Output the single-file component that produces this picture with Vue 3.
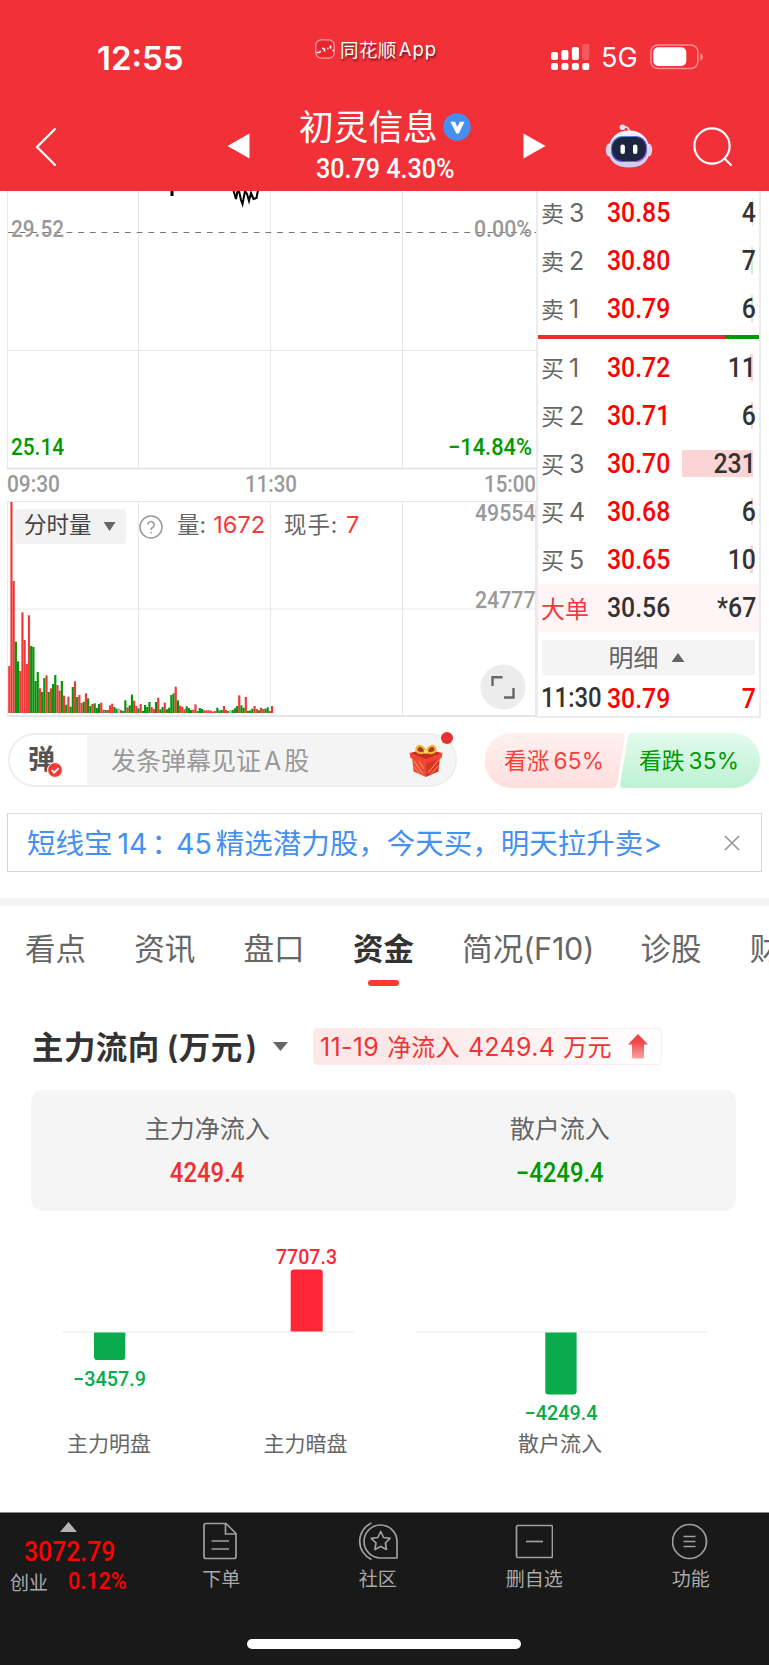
<template>
  <div class="page" lang="zh-CN">
    <header class="header">
      <div class="status">
        <span class="clock">12:55</span>
        <span class="app">
          <svg class="app-logo" viewBox="0 0 20 20">
            <rect x="0.8" y="0.8" width="18.4" height="18.4" rx="5.5" fill="#e8262d" stroke="#f79a9d" stroke-width="1.3" />
            <path d="M1.5 13.5h2.2M4 14l1.6-2M7 9.5h2M9.5 12.5v-3M12 9.5h1.6M15.5 6.5v3M17.5 11.5h1.5" fill="none" stroke="#fff" stroke-width="1.7" />
          </svg>
          <span class="app-name">同花顺</span><span class="app-latin">App</span>
        </span>
        <span class="signal">
          <svg width="39" height="28" viewBox="0 0 39 28" fill="#fff">
            <rect x="0" y="9" width="7" height="8" rx="2" /><rect x="10.4" y="7" width="7" height="10" rx="2" />
            <rect x="20.9" y="4" width="7" height="13" rx="2" /><rect x="31.3" y="1" width="7" height="16" rx="2" opacity="0.2" />
            <rect v-for="n in 4" :key="n" :x="(n - 1) * 10.43" y="20" width="7" height="7" rx="2" />
          </svg>
          <span class="net">5G</span>
          <svg width="54" height="26" viewBox="0 0 54 26">
            <rect x="0.9" y="0.9" width="47" height="23.6" rx="7" fill="none" stroke="#fff" stroke-opacity="0.45" stroke-width="1.5" />
            <rect x="3.3" y="3.3" width="33" height="18.6" rx="5" fill="#fff" />
            <path d="M50.4 9v8q2.6-1.4 2.6-4t-2.6-4z" fill="#fff" opacity="0.45" />
          </svg>
        </span>
      </div>
      <nav class="nav">
        <svg class="back" width="22" height="40" viewBox="0 0 22 40"><path d="M20.5 1.5L2 20l18.5 18.5" fill="none" stroke="#fff" stroke-width="2.3" /></svg>
        <svg class="arrow" width="23" height="26" viewBox="0 0 23 26"><path d="M0.5 13L22.5 0.5v25z" fill="#fff" /></svg>
        <div class="title">
          <div class="name">
            <span>初灵信息</span>
            <svg width="28" height="28" viewBox="0 0 28 28"><circle cx="14" cy="14" r="13.7" fill="#458ff0" /><path d="M7.4 8.8h4.6l2.4 5.2 2.4-5.2h4.7L15.8 20.5h-2.4z" fill="#fff" /></svg>
          </div>
          <div class="price din">30.79 4.30%</div>
        </div>
        <svg class="arrow" width="23" height="26" viewBox="0 0 23 26"><path d="M22.5 13L0.5 0.5v25z" fill="#fff" /></svg>
        <svg class="robot" width="48" height="44" viewBox="0 0 48 44">
          <defs>
            <linearGradient id="shell" x1="0" y1="0" x2="0" y2="1"><stop offset="0" stop-color="#f6f5fd" /><stop offset="1" stop-color="#c9cce8" /></linearGradient>
            <linearGradient id="glow" x1="0" y1="0" x2="1" y2="1"><stop offset="0" stop-color="#3fb6e8" /><stop offset="0.5" stop-color="#5a4be0" /><stop offset="1" stop-color="#b05cf0" /></linearGradient>
          </defs>
          <path d="M18 3q6-1 6.500 5" fill="none" stroke="#d5d7ef" stroke-width="1.6" />
          <circle cx="17.5" cy="3.2" r="2.8" fill="#dfe1f5" />
          <ellipse cx="4" cy="26" rx="3.2" ry="6.500" fill="#d3d5ec" /><ellipse cx="44" cy="26" rx="3.2" ry="6.500" fill="#d3d5ec" />
          <path d="M24 6.500C36 6.500 44 14 44.500 26 44.500 38 36 43.500 24 43.500S3.500 38 3.500 26C4 14 12 6.500 24 6.500z" fill="url(#shell)" />
          <rect x="6.500" y="12.500" width="35" height="25" rx="11" fill="#1d2540" stroke="url(#glow)" stroke-width="1.2" />
          <rect x="15.500" y="20.500" width="4.400" height="9.500" rx="2" fill="#fff" /><rect x="28" y="20.500" width="4.400" height="9.500" rx="2" fill="#fff" />
        </svg>
        <svg class="search" width="40" height="40" viewBox="0 0 40 40" fill="none" stroke="#fff" stroke-width="2.2"><circle cx="19" cy="19" r="17.6" /><path d="M31 31l7.5 7.5" /></svg>
      </nav>
    </header>

    <section class="quote">
      <div class="charts">
        <svg class="chart" width="530" height="527" viewBox="7 191 530 527">
          <g stroke="#e8e8e8" stroke-width="1" fill="none">
            <path d="M138.5 191v278M270.5 191v278M402.5 191v278M138.5 501v215M270.5 501v215M402.5 501v215" />
            <path d="M7.5 191v278M7.5 501v216M8 350.5h528M8 501.5h528M8 609h528M535.5 501v215" />
            <path d="M7 468.5h530M7 716h530" stroke-width="2" stroke="#e6e6e6" />
          </g>
          <path d="M171.5 189v7M172.5 196v-7M233 189l3 10 1.5-8h1.500l2 9 1.500 4 2.500-13 2 3 2 7 2-8 2.500 6 3-1 1.500-8" fill="none" stroke="#000" stroke-width="2" />
          <path d="M8 232.5h528" stroke="#777" stroke-width="1.1" stroke-dasharray="5.8 5.9" />
          <rect v-for="(b, i) in volumes" :key="i" :x="8.2 + i * 2.19" :y="713 - b[0] / 3" width="2.19" :height="b[0] / 3" :fill="b[1]" />
          <text
            v-for="l in chartLabels" :key="l.text" class="axis" :class="l.tone" :x="l.x" :y="l.y"
            :textLength="l.w" lengthAdjust="spacingAndGlyphs"
          >{{ l.text }}</text>
          <circle cx="503" cy="687" r="22.5" fill="#ececec" />
          <path d="M492.500 686v-8.800h10M504 697.500h9.500v-9.500" fill="none" stroke="#666" stroke-width="2.4" />
        </svg>
        <div class="vol-bar">
          <span class="vol-select">分时量<i class="caret" /></span>
          <svg width="24" height="24" viewBox="0 0 24 24" fill="none" stroke="#999" stroke-width="1.5"><circle cx="12" cy="12" r="11" /><path d="M8.8 9.600a3.200 3.200 0 1 1 4.800 2.900q-1.600.9-1.600 2.500" /><path d="M12 16.700v1.700" /></svg>
          <span class="vol-item">量: <b>1672</b></span>
          <span class="vol-item">现手: <b>7</b></span>
        </div>
      </div>

      <div class="book">
        <div v-for="r in asks" :key="r.label" class="row">
          <span class="label">{{ r.label[0] }}<em>{{ r.label[1] }}</em></span>
          <span class="din bid">{{ r.price }}</span>
          <span class="qty"><i class="depth ask" :style="{ width: r.bar + 'px' }" /><span class="din">{{ r.qty }}</span></span>
        </div>
        <div class="ratio" />
        <div v-for="r in bids" :key="r.label" class="row">
          <span class="label">{{ r.label[0] }}<em>{{ r.label[1] }}</em></span>
          <span class="din bid">{{ r.price }}</span>
          <span class="qty"><i class="depth" :style="{ width: r.bar + 'px' }" /><span class="din">{{ r.qty }}</span></span>
        </div>
        <div class="row big">
          <span class="label">大单</span>
          <span class="din">30.56</span>
          <span class="qty"><span class="din">*67</span></span>
        </div>
        <div class="detail"><span>明细</span><i class="caret up" /></div>
        <div class="row tick">
          <span class="din time">11:30</span>
          <span class="din bid">30.79</span>
          <span class="qty"><span class="din bid">7</span></span>
        </div>
      </div>
    </section>

    <section class="danmu">
      <div class="input">
        <span class="toggle">
          弹
          <svg class="check" viewBox="0 0 16 16"><circle cx="8" cy="8" r="7.4" fill="#f23a35" stroke="#fff" stroke-width="1" /><path d="M4.600 8l2.600 2.700 4.400-4.500" fill="none" stroke="#fff" stroke-width="1.8" /></svg>
        </span>
        <span class="hint">发条弹幕见证<em>A</em>股</span>
        <svg class="gift" width="34" height="35" viewBox="0 0 34 35">
          <path d="M3 13L17 18v16L4.500 28.500z" fill="#ee4b33" /><path d="M31 13L17 18v16l12.500-5.500z" fill="#d93425" />
          <path d="M1 10L17 6l16 4L17 17.500z" fill="#c92a1f" /><path d="M0.500 9.500L17 16v4.500L1.500 15zM33.500 9.500L17 16v4.500L32.500 15z" fill="#f0452f" />
          <path d="M5 18l9 13M4.500 23l6 7.500M29.500 17L19 30M30 22l-8 9M10 18l5 8" stroke="#f98a5e" stroke-width="1.1" />
          <path d="M16.500 9C12 11 7 10 7.500 6S14 1 16.500 9zM17.500 9C22 11 27 10 26.500 6S20 1 17.500 9z" fill="#a83a14" stroke="#f2b33a" stroke-width="2.2" />
          <circle cx="17" cy="8.5" r="2.300" fill="#ffd767" />
        </svg>
        <i class="dot" />
      </div>
      <div class="vote">
        <svg width="275" height="55" viewBox="0 0 275 55">
          <defs>
            <linearGradient id="up" x1="0" y1="0" x2="0" y2="1"><stop offset="0" stop-color="#fff0f0" /><stop offset="1" stop-color="#ffdfde" /></linearGradient>
            <linearGradient id="down" x1="0" y1="0" x2="0" y2="1"><stop offset="0" stop-color="#e2fbec" /><stop offset="1" stop-color="#bdf2d3" /></linearGradient>
          </defs>
          <path d="M27 0h109q4.5 0 3.700 4.500l-7.500 45.500q-.8 5-5 5H27a27.500 27.500 0 0 1 0-55z" fill="url(#up)" />
          <path d="M148 0h99.500a27.500 27.500 0 0 1 0 55H138.500q-4 0-3.300-4.500l7.500-46q.8-4.500 5.300-4.500z" fill="url(#down)" />
        </svg>
        <div class="vote-text"><span>看涨<em>65%</em></span><span class="fall">看跌<em>35%</em></span></div>
      </div>
    </section>

    <div class="promo">
      <span>短线宝<em>14</em>：<em class="n45">45</em>精选潜力股，今天买，明天拉升卖<em class="gt">&gt;</em></span>
      <svg width="16" height="16" viewBox="0 0 16 16" stroke="#999" stroke-width="1.7"><path d="M1 1l14 14M15 1L1 15" /></svg>
    </div>

    <nav class="tabs">
      <span v-for="t in tabs" :key="t" class="tab" :class="{ active: t === '资金' }">{{ t }}</span>
      <span class="tab wide">简况<em>(F10)</em></span>
      <span class="tab">诊股</span>
      <span class="tab">财务</span>
    </nav>

    <section class="flow">
      <div class="flow-head">
        <h2>主力流向<em>(</em>万元<em class="close">)</em></h2>
        <i class="caret" />
        <span class="tag">
          <span class="tag-text"><em>11-19</em> 净流入 <em>4249.4</em> 万元</span>
          <svg width="20" height="25" viewBox="0 0 20 25">
            <defs><linearGradient id="rise" x1="0" y1="0" x2="0" y2="1"><stop offset="0.3" stop-color="#ee4444" /><stop offset="1" stop-color="#f8a5a5" /></linearGradient></defs>
            <path d="M10 0l10 10.5h-4V23q0 1.500-1.500 1.500h-9Q4 24.500 4 23V10.500H0z" fill="url(#rise)" />
          </svg>
        </span>
      </div>
      <div class="card">
        <div><p>主力净流入</p><strong class="din red">4249.4</strong></div>
        <div><p>散户流入</p><strong class="din green">−4249.4</strong></div>
      </div>
      <svg class="bars" width="769" height="301" viewBox="0 1211 769 301">
        <path d="M63 1332h290.5M416.5 1332H706.5" stroke="#f4f4f4" stroke-width="2" />
        <path d="M94 1332.5h31.300V1357q0 3-3 3H97q-3 0-3-3z" fill="#0aab4c" />
        <path d="M290.700 1331.500V1272.500q0-3 3-3h26q3 0 3 3v59z" fill="#ff2637" />
        <path d="M545.300 1332.500h31.300V1391.500q0 3-3 3h-25.300q-3 0-3-3z" fill="#0aab4c" />
        <text class="bar-num" fill="#0aab4c" x="73" y="1385.5" textLength="73" lengthAdjust="spacingAndGlyphs">−3457.9</text>
        <text class="bar-num" fill="#ff2637" x="276" y="1263.5" textLength="61" lengthAdjust="spacingAndGlyphs">7707.3</text>
        <text class="bar-num" fill="#0aab4c" x="524.5" y="1420" textLength="73" lengthAdjust="spacingAndGlyphs">−4249.4</text>
        <text class="bar-name" x="109" y="1450.5">主力明盘</text>
        <text class="bar-name" x="305.5" y="1450.5">主力暗盘</text>
        <text class="bar-name" x="560" y="1450.5">散户流入</text>
      </svg>
    </section>

    <footer class="footer">
      <div class="menu">
        <div class="index">
          <i class="caret up" />
          <span class="din point">3072.79</span>
          <div class="index-row"><span>创业</span><span class="din pct">0.12%</span></div>
        </div>
        <div class="item">
          <svg width="38" height="38" viewBox="0 0 38 38"><path d="M24 1.500H4q-2 0-2 2v31q0 2 2 2h28q2 0 2-2V11.500zM23.500 2V12h10.500" /><path d="M9.500 19H27M9.500 27H27" /></svg>
          <span>下单</span>
        </div>
        <div class="item">
          <svg class="community" width="40" height="38" viewBox="0 0 40 38"><path d="M39 36H23A16.500 16.500 0 1 1 39 19.500zM13.500 1A20 20 0 0 0 13.500 37.500" /><path d="M22.700 9.500l2.900 6 6.500.9-4.700 4.600 1.100 6.500-5.800-3.100-5.800 3.100 1.100-6.500-4.700-4.600 6.500-.9z" stroke-linejoin="round" /></svg>
          <span>社区</span>
        </div>
        <div class="item">
          <svg width="38" height="38" viewBox="0 0 38 38"><rect x="1.500" y="3.500" width="36" height="32" rx="1.500" /><path d="M11 19.500h17" /></svg>
          <span>删自选</span>
        </div>
        <div class="item">
          <svg width="38" height="38" viewBox="0 0 38 38"><circle cx="17.500" cy="19.500" r="17" /><path d="M11.500 14.500h12M11.500 19.500h12M11.500 24.500h12" /></svg>
          <span>功能</span>
        </div>
      </div>
      <div class="home" />
    </footer>
  </div>
</template>

<script setup>
const tones = { r: '#ef3a3a', g: '#0a930a', n: '#bbb' }

// one entry per minute of the morning session
const volumes = (
  '141r 633r 396r 214g 155g 126r 302r 219r 147r 293r 201g 198g 96g 123g 74r 63g 105g 113r 63g 74r ' +
  '87g 114g 84r 67r 96g 52r 25g 49r 19g 78g 95r 48g 54r 30r 34g 59r 44g 21g 27r 29g ' +
  '15g 27g 31r 10r 9g 9r 23r 28r 18g 13g 14n 9r 6g 38g 17r 23g 55g 37r 21r 14g ' +
  '27r 6g 24g 18g 33g 18r 12r 33g 46r 11g 18g 31r 11g 16g 54g 59g 79r 38g 22r 19r ' +
  '11r 20g 15g 9g 10r 26r 6g 15g 12g 8r 8r 8r 7r 4r 6r 16g 8g 9g 21r 9r ' +
  '6g 9n 9g 14g 21g 53r 23g 16g 48r 6g 8g 13g 21r 12r 8g 16r 12r 13g 17g 6r 21r'
).split(' ').map((v) => [parseInt(v), tones[v.slice(-1)]])

const chartLabels = [
  { text: '29.52', x: 11, y: 237, w: 53 },
  { text: '0.00%', x: 474, y: 237, w: 58 },
  { text: '25.14', x: 11, y: 455, w: 53, tone: 'fall' },
  { text: '−14.84%', x: 448, y: 455, w: 84, tone: 'fall' },
  { text: '09:30', x: 7, y: 492, w: 53 },
  { text: '11:30', x: 245, y: 492, w: 52 },
  { text: '15:00', x: 484, y: 492, w: 52 },
  { text: '49554', x: 475, y: 521, w: 60.5 },
  { text: '24777', x: 475, y: 607.5, w: 60.5 },
]

const asks = [
  { label: '卖3', price: '30.85', qty: '4', bar: 1.5 },
  { label: '卖2', price: '30.80', qty: '7', bar: 2 },
  { label: '卖1', price: '30.79', qty: '6', bar: 2 },
]
const bids = [
  { label: '买1', price: '30.72', qty: '11', bar: 3 },
  { label: '买2', price: '30.71', qty: '6', bar: 2 },
  { label: '买3', price: '30.70', qty: '231', bar: 71 },
  { label: '买4', price: '30.68', qty: '6', bar: 2 },
  { label: '买5', price: '30.65', qty: '10', bar: 3 },
]

const tabs = ['看点', '资讯', '盘口', '资金']
</script>

<style>
body {
  margin: 0;
  background: #fff;
}
</style>

<style scoped>
.page {
  width: 769px;
  height: 1665px;
  overflow: hidden;
  display: flex;
  flex-direction: column;
  background: #fff;
  color: #666;
  font-family: Inter, "Noto Sans CJK SC", sans-serif;
}

.page * {
  box-sizing: border-box;
}

svg {
  display: block;
  flex-shrink: 0;
}

em {
  font-style: normal;
}

.din {
  display: inline-block;
  font-family: Roboto, "Noto Sans CJK SC", sans-serif;
  font-weight: 500;
  font-size: 28px;
  transform: scaleX(0.885);
  transform-origin: left center;
  white-space: nowrap;
}

.caret {
  width: 12px;
  height: 9px;
  background: #666;
  clip-path: polygon(0 0, 100% 0, 50% 100%);
}

.caret.up {
  clip-path: polygon(0 100%, 100% 100%, 50% 0);
}

/* header */
.header {
  position: relative;
  z-index: 1;
  flex: 0 0 191px;
  background: #f23038;
  color: #fff;
}

.status {
  display: grid;
  grid-template-columns: 315px 236px 1fr;
  height: 108px;
  padding-top: 37px;
}

.clock {
  padding-left: 97px;
  font-size: 33px;
  font-weight: 600;
  line-height: 43px;
}

.app {
  display: flex;
  align-items: center;
  height: 24px;
  font-size: 18.5px;
  text-shadow: 1px 2px 2px rgba(0, 0, 0, 0.55);
}

.app-logo {
  width: 20px;
  height: 20px;
  margin-right: 5px;
}

.app-name {
  letter-spacing: 0.4px;
}

.app-latin {
  margin-left: 2px;
  letter-spacing: 1px;
}

.signal {
  display: flex;
  align-items: center;
  height: 40px;
}

.net {
  width: 49px;
  margin-left: 11px;
  font-size: 27px;
}

.nav {
  display: grid;
  grid-template-columns: 227px 73px 223px 82px 88px 1fr;
}

.back {
  margin: 19px 0 0 35px;
}

.arrow {
  margin-top: 25px;
}

.robot {
  margin-top: 16px;
}

.search {
  margin-top: 19px;
}

.name {
  display: flex;
  align-items: center;
  gap: 5px;
  height: 38px;
  font-size: 34.7px;
  white-space: nowrap;
}

.name span {
  margin: -4px 0 0 -1px;
}

.price {
  margin: 7px 0 0 16px;
  line-height: 32px;
  font-size: 27px;
  transform: scaleX(0.93);
}

/* quote */
.quote {
  display: flex;
  flex: 0 0 527px;
  padding-left: 7px;
}

.charts {
  position: relative;
  width: 529px;
}

.chart {
  overflow: visible;
}

.axis {
  font-family: Roboto, sans-serif;
  font-size: 23px;
  font-weight: 500;
  fill: #999;
}

.axis.fall {
  fill: #090;
}

.vol-bar {
  position: absolute;
  top: 318px;
  left: 8px;
  display: flex;
  align-items: center;
  font-size: 22.5px;
  line-height: 32px;
}

.vol-select {
  display: flex;
  align-items: center;
  gap: 12px;
  width: 111px;
  height: 35px;
  margin-right: 13px;
  padding: 0 0 3px 9px;
  background: #f2f2f2;
  border-radius: 4px;
  color: #444;
}

.vol-select .caret {
  margin-top: 3px;
}

.vol-item {
  margin: -3px 0 0 14px;
  white-space: nowrap;
}

.vol-item + .vol-item {
  margin-left: 19px;
  letter-spacing: 0.8px;
}

.vol-item b {
  margin-left: 1px;
  color: #f23a3a;
  font-size: 23.5px;
  font-weight: 400;
  letter-spacing: 0;
}

.book {
  width: 225px;
  height: 527px;
  border: solid #ececec;
  border-width: 0 2px 2px;
  overflow: hidden;
}

.row {
  display: grid;
  grid-template-columns: 66px 1fr 70px;
  align-items: center;
  height: 48px;
  padding: 0 3px 2px;
  color: #333;
}

.row:first-child {
  margin-top: -2px;
}

.label {
  color: #666;
  font-size: 23px;
  white-space: nowrap;
}

.label em {
  margin-left: 5px;
  font-size: 25px;
}

.bid {
  color: #f00;
}

.qty {
  position: relative;
  text-align: right;
}

.qty .din {
  position: relative;
  transform-origin: right center;
}

.depth {
  position: absolute;
  top: 50%;
  right: 3px;
  height: 27px;
  margin-top: -13px;
  background: #fbd5d5;
}

.depth.ask {
  background: #cfeccf;
}

.ratio {
  height: 4px;
  margin: 2px 0 5px;
  background: linear-gradient(90deg, #e62e2e 84.5%, #090 84.5%);
}

.big {
  background: #fff5f6;
}

.big .label {
  color: #f23a3a;
  font-size: 24px;
}

.detail {
  display: flex;
  align-items: center;
  justify-content: center;
  gap: 13px;
  height: 35px;
  margin: 8px 4px 0;
  padding-right: 4px;
  background: #f4f4f4;
  font-size: 25px;
}

.detail span {
  margin-top: -4px;
}

.detail .caret {
  width: 13px;
}

.time {
  font-size: 27px;
}

/* danmu */
.danmu {
  display: flex;
  flex: 0 0 55px;
  margin: 15px 8px 0;
}

.input {
  position: relative;
  display: flex;
  align-items: center;
  width: 449px;
  height: 54px;
  border: 2px solid #eee;
  border-radius: 27px;
  background: linear-gradient(90deg, #fff 77px, #f4f4f4 77px);
}

.toggle {
  position: relative;
  width: 101px;
  padding: 0 0 5px 18px;
  color: #555;
  font-size: 27px;
  font-weight: 700;
}

.check {
  position: absolute;
  left: 37px;
  bottom: 4px;
  width: 16px;
}

.hint {
  flex: 1;
  margin-top: -3px;
  color: #999;
  font-size: 25px;
}

.hint em {
  margin: 0 3px;
}

.gift {
  margin-right: 12px;
}

.dot {
  position: absolute;
  top: -3px;
  right: 2px;
  width: 12px;
  height: 12px;
  border-radius: 50%;
  background: #e93030;
}

.vote {
  position: relative;
  margin-left: 28px;
}

.vote-text {
  position: absolute;
  inset: 0;
  display: flex;
  align-items: center;
  padding: 0 0 3px 19px;
  color: #fa3f3a;
  font-size: 22.7px;
  white-space: nowrap;
}

.vote-text span {
  flex: 0 0 135px;
}

.vote-text span:last-child {
  flex-basis: 110px;
}

.vote-text em {
  margin-left: 4px;
  letter-spacing: 0.3px;
}

.vote-text .fall {
  color: #090;
}

/* promo */
.promo {
  display: flex;
  align-items: center;
  justify-content: space-between;
  flex: 0 0 59px;
  margin: 25px 7px 0;
  padding: 0 21px 0 19px;
  border: 1px solid #d8d8d8;
  color: #4590f0;
  font-size: 28.5px;
  white-space: nowrap;
}

.promo span {
  margin-top: -3px;
}

.promo em {
  margin: 0 4px 0 5px;
}

.promo .n45 {
  margin: 0 4px 0 -4px;
}

.promo .gt {
  margin: 0;
}

/* tabs */
.tabs {
  display: flex;
  flex: 0 0 111px;
  gap: 48.3px;
  margin-top: 26px;
  padding: 20px 0 0 25px;
  border-top: 8px solid #f4f4f4;
  font-size: 30.5px;
  white-space: nowrap;
}

.tab {
  display: flex;
  flex-direction: column;
  flex-shrink: 0;
  line-height: 46px;
}

.wide {
  flex-direction: row;
  margin-right: -2px;
}

.wide em {
  letter-spacing: -0.2px;
}

.active {
  color: #333;
  font-weight: 700;
}

.active::after {
  content: "";
  align-self: center;
  width: 31px;
  height: 6px;
  margin-top: 8px;
  border-radius: 3px;
  background: #fb3a32;
}

/* money flow */
.flow-head {
  display: flex;
  align-items: center;
  height: 37px;
  margin-top: 19px;
  padding-left: 32px;
}

h2 {
  width: 241px;
  margin: -4px 0 0;
  color: #333;
  font-size: 31.5px;
  font-weight: 700;
  letter-spacing: 0.4px;
  white-space: nowrap;
}

h2 em {
  margin-left: 7px;
  font-weight: 600;
}

h2 .close {
  margin-left: 3px;
}

.flow-head .caret {
  width: 15px;
}

.tag {
  display: flex;
  align-items: center;
  justify-content: space-between;
  width: 349px;
  height: 37px;
  margin-left: 25px;
  padding: 0 13px 0 6px;
  border: 1px solid #fdecec;
  border-radius: 4px;
  background: linear-gradient(90deg, #fde8e8 30%, #fff);
  color: #ee3535;
  font-size: 24px;
  white-space: nowrap;
}

.tag-text {
  margin-top: -3px;
  letter-spacing: 0.2px;
  word-spacing: 1.2px;
}

.tag-text em {
  font-size: 25px;
  letter-spacing: 0.3px;
}

.card {
  display: grid;
  grid-template-columns: 1fr 1fr;
  height: 121px;
  margin: 25px 33px 0 31px;
  border-radius: 12px;
  background: #f5f5f5;
  text-align: center;
}

.card p {
  margin: 21px 0 0;
  font-size: 25px;
  line-height: 36px;
}

.card .din {
  margin-top: 8px;
  font-size: 27px;
  line-height: 36px;
  transform-origin: center;
}

.red {
  color: #f03030;
}

.green {
  color: #090;
}

.bar-num {
  font-family: Roboto, sans-serif;
  font-size: 20.5px;
  font-weight: 500;
}

.bar-name {
  fill: #666;
  font-size: 21px;
  text-anchor: middle;
}

/* footer */
.footer {
  display: flex;
  flex-direction: column;
  flex: 1;
  border-top: 1px solid #888;
  background: #191919;
  color: #aaa;
  font-size: 19px;
}

.menu {
  display: grid;
  grid-template-columns: 143px repeat(4, 1fr);
  height: 126px;
}

.index {
  display: flex;
  flex-direction: column;
  align-items: flex-start;
  padding: 9px 0 0 10px;
}

.index .caret {
  width: 17px;
  height: 10px;
  margin-left: 50px;
  background: #b5b5b5;
}

.point {
  margin: 4px 0 0 14px;
  line-height: 32px;
  color: #f00;
}

.index-row {
  display: flex;
  align-items: center;
  height: 27px;
}

.pct {
  margin-left: 20px;
  font-size: 23px;
  color: #f00;
  transform: scaleX(0.94);
}

.item {
  display: flex;
  flex-direction: column;
  align-items: center;
  padding-top: 9px;
  line-height: 30px;
}

.item svg {
  margin-bottom: 5px;
  fill: none;
  stroke: #a0a0a0;
  stroke-width: 1.7px;
}

.home {
  width: 274px;
  height: 10px;
  margin-left: 247px;
  border-radius: 5px;
  background: #fff;
}
</style>
